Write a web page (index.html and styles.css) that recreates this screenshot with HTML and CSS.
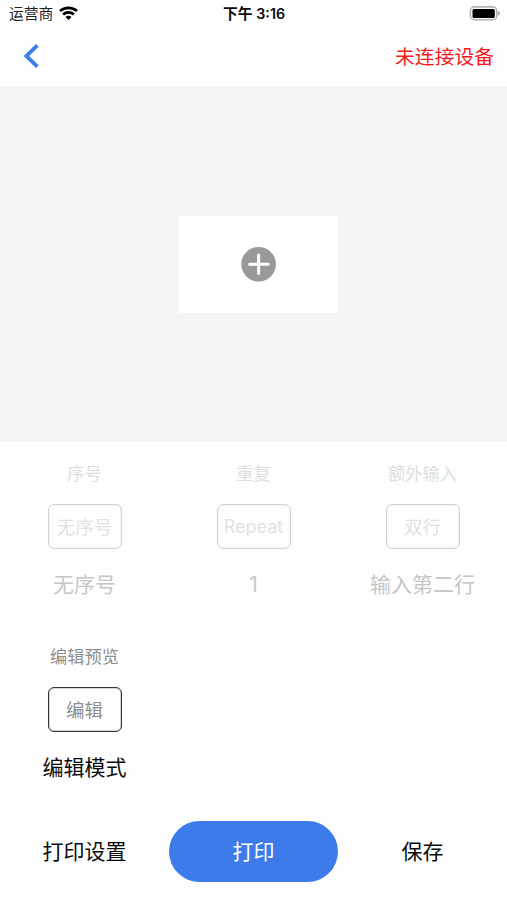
FILE: index.html
```html
<!DOCTYPE html>
<html lang="zh-CN">
<head>
<meta charset="utf-8">
<title>打印</title>
<link rel="stylesheet" href="styles.css">
</head>
<body>
<div class="status">
  <div class="carrier"><span>运营商</span>
    <svg class="wifi" width="19" height="14" viewBox="0 0 19 14"><g fill="none" stroke="#000" stroke-width="2.7"><path d="M1 5.1C5.7.7 13.3.7 18 5.1"/><path d="M4.1 8.5c3-2.8 7.8-2.8 10.8 0"/></g><path d="M6.5 11c1.7-1.6 4.3-1.6 6 0l-3 3z"/></svg>
  </div>
  <div class="time">下午 <span>3:16</span></div>
  <div class="power">
    <svg width="32" height="15" viewBox="0 0 32 15"><rect x="1.4" y=".9" width="26.4" height="12.8" rx="4" fill="#fff" stroke="#b4b4b4" stroke-width="1.6"/><rect x="3.5" y="2.9" width="22.3" height="9" rx="1.5"/><path d="M29 5c2.5.8 2.5 3.8 0 4.6z" fill="#a9a9a9"/></svg>
  </div>
</div>
<header class="nav">
  <svg class="back" width="18" height="26" viewBox="0 0 18 26"><path d="M15.3 2.4 4.5 13l10.8 10.6" fill="none" stroke="#3d7be8" stroke-width="3.8"/></svg>
  <span class="device">未连接设备</span>
</header>
<main class="canvas">
  <div class="label-paper">
    <svg width="36" height="36" viewBox="0 0 36 36"><circle cx="17.6" cy="18.2" r="17.3" fill="#999"/><path d="M17.6 9v18.6M8.6 18.3h18.6" stroke="#fff" stroke-width="3" stroke-linecap="round"/></svg>
  </div>
</main>
<section class="tools">
  <div class="tool disabled"><div class="title">序号</div><div class="box">无序号</div><div class="value">无序号</div></div>
  <div class="tool disabled"><div class="title">重复</div><div class="box latin">Repeat</div><div class="value">1</div></div>
  <div class="tool disabled"><div class="title">额外输入</div><div class="box">双行</div><div class="value">输入第二行</div></div>
  <div class="tool"><div class="title">编辑预览</div><div class="box">编辑</div><div class="value">编辑模式</div></div>
</section>
<footer class="actions">
  <div class="action">打印设置</div>
  <div class="action primary">打印</div>
  <div class="action">保存</div>
</footer>
</body>
</html>
```
FILE: styles.css
```css
* { box-sizing: border-box; }
body {
  margin: 0;
  height: 900px;
  background: #fefefe;
  color: #0a0a0a;
  font-family: Inter, "Noto Sans CJK SC", sans-serif;
  overflow: hidden;
}
svg { display: block; }
.status {
  display: grid;
  grid-template-columns: 1fr auto 1fr;
  align-items: center;
  height: 27px;
  padding: 0 6px 0 9px;
  font-size: 14.8px;
  line-height: 27px;
}
.carrier { display: flex; align-items: center; gap: 6px; }
.carrier span { padding-top: 1px; color: #222; }
.wifi { margin-top: -3px; }
.time { padding-right: 2px; font-size: 14.8px; font-weight: 600; }
.time span { font-size: 14.2px; }
.power { display: flex; justify-content: flex-end; margin-top: -2px; }
.nav {
  display: flex;
  align-items: center;
  justify-content: space-between;
  height: 59px;
  padding: 0 13px 0 22px;
}
.back { margin-top: -2px; }
.device { color: #f4191b; font-size: 19.8px; line-height: 30px; }
.canvas {
  display: flex;
  align-items: center;
  justify-content: center;
  height: 356px;
  padding-left: 10px;
  background: #f5f5f5;
}
.label-paper {
  display: flex;
  align-items: center;
  justify-content: center;
  width: 159px;
  height: 97px;
  background: #fff;
}
.tools {
  display: grid;
  grid-template-columns: repeat(3, 1fr);
  grid-auto-rows: 183px;
  padding-top: 17px;
}
.tool { display: flex; flex-direction: column; align-items: center; }
.title { color: #8e8e8e; font-size: 17.2px; line-height: 30px; }
.box {
  display: flex;
  align-items: center;
  justify-content: center;
  width: 74px;
  height: 45px;
  margin: 15px 0 16px;
  padding-bottom: 1px;
  border: 1.5px solid #333;
  border-radius: 6px;
  box-shadow: inset 0 0 0 .5px #3336;
  color: #8e8e8e;
  font-size: 18.5px;
}
.latin { font-size: 18px; }
.value { font-size: 21px; line-height: 40px; }
.disabled .title { color: #dedede; }
.disabled .box { color: #e2e2e2; border-color: #d4d4d4; box-shadow: inset 0 0 0 .5px #d4d4d466; }
.disabled .value { color: #c6c6c6; }
.actions {
  display: grid;
  grid-template-columns: repeat(3, 1fr);
  align-items: center;
  height: 61px;
  margin-top: -4px;
  font-size: 21px;
  line-height: 61px;
  text-align: center;
}
.primary {
  height: 61px;
  border-radius: 31px;
  background: #3d7bea;
  color: #fff;
}
```
